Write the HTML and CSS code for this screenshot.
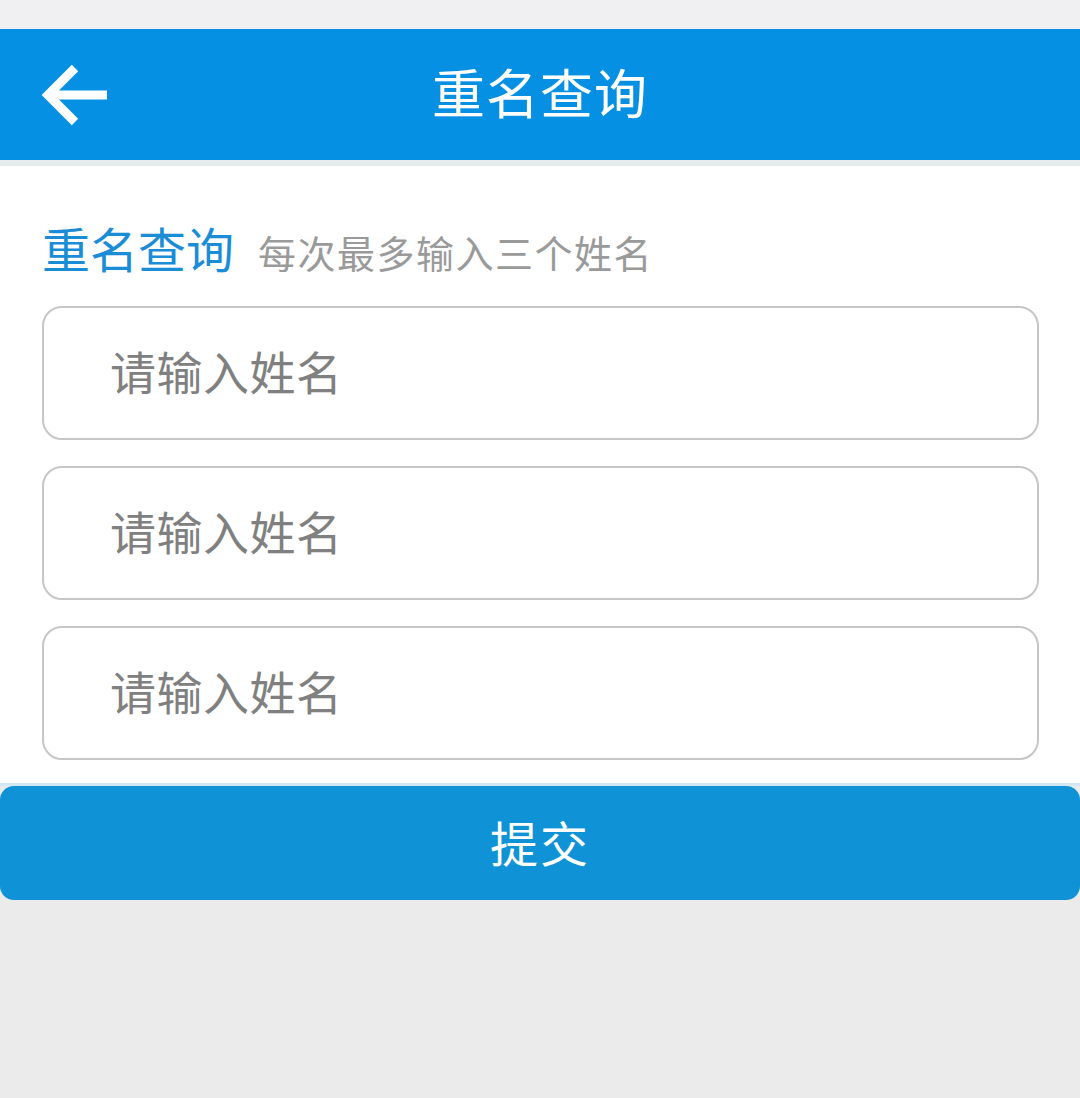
FILE: index.html
```html
<!DOCTYPE html>
<html lang="zh-CN">
<head>
<meta charset="utf-8">
<title>重名查询</title>
<link rel="stylesheet" href="styles.css">
</head>
<body>
<div class="status"></div>
<header class="topbar">
  <a class="back" href="#" aria-label="返回">
    <svg width="68" height="62" viewBox="0 0 68 62">
      <path d="M34 4 L7 31 L34 58 M7 31 L66 31" fill="none" stroke="#fff" stroke-width="9" stroke-linecap="butt" stroke-linejoin="miter"/>
    </svg>
  </a>
  <h1 class="topbar-title">重名查询</h1>
</header>
<div class="divider"></div>
<main class="panel">
  <div class="section-head">
    <span class="section-title">重名查询</span>
    <span class="section-sub">每次最多输入三个姓名</span>
  </div>
  <div class="fields">
    <input class="field" type="text" placeholder="请输入姓名">
    <input class="field" type="text" placeholder="请输入姓名">
    <input class="field" type="text" placeholder="请输入姓名">
  </div>
</main>
<div class="btn-line"></div>
<button class="submit" type="button">提交</button>
</body>
</html>
```

FILE: styles.css
```css
* { box-sizing: border-box; }
html, body {
  margin: 0;
  padding: 0;
  background: #ebebeb;
  font-family: "Noto Sans CJK SC", "Noto Sans", sans-serif;
}
.status {
  height: 29px;
  background: #f0f0f2;
}
.topbar {
  position: relative;
  height: 131px;
  background: #0690e3;
  display: flex;
  align-items: center;
  justify-content: center;
  padding-bottom: 6px;
}
.back {
  position: absolute;
  left: 41px;
  top: 35px;
  display: block;
  width: 68px;
  height: 62px;
}
.back svg { display: block; }
.topbar-title {
  margin: 0;
  color: #ffffff;
  font-size: 53px;
  font-weight: normal;
  line-height: 1;
  letter-spacing: 1px;
}
.divider {
  height: 6px;
  background: #e6ecee;
}
.panel {
  background: #ffffff;
  padding: 57px 41px 23px 42px;
}
.section-head {
  display: flex;
  align-items: baseline;
  height: 48px;
  line-height: 48px;
  margin-bottom: 35px;
}
.section-title {
  color: #1a8dd6;
  font-size: 48px;
  margin-right: 24px;
}
.section-sub {
  color: #9a9a9a;
  font-size: 38px;
  letter-spacing: 1.5px;
}
.fields {
  display: flex;
  flex-direction: column;
  gap: 26px;
}
.field {
  display: block;
  width: 100%;
  height: 134px;
  border: 2px solid #c6c6c6;
  border-radius: 20px;
  background: #ffffff;
  padding: 0 0 6px 66px;
  font-family: "Noto Sans CJK SC", "Noto Sans", sans-serif;
  font-size: 46px;
  letter-spacing: 0.5px;
  color: #333;
  outline: none;
}
.field::placeholder {
  color: #808080;
}
.btn-line {
  height: 3px;
  background: #d3e8f4;
}
.submit {
  display: block;
  width: 100%;
  height: 114px;
  margin: 0;
  border: none;
  border-radius: 14px;
  background: #0f92d6;
  color: #ffffff;
  font-family: "Noto Sans CJK SC", "Noto Sans", sans-serif;
  font-size: 48px;
  letter-spacing: 2px;
  padding: 0 0 4px 0;
  cursor: pointer;
}
```
